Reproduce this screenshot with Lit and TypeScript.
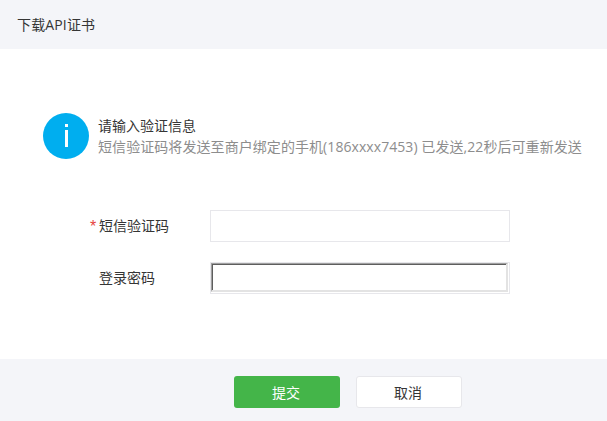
import { LitElement, html, css } from "lit";
import { customElement } from "lit/decorators.js";

@customElement("app-root")
export class AppRoot extends LitElement {
  static styles = css`
    :host { display: block; width: 607px; height: 421px; background: #fff; font-family: "Open Sans", "Noto Sans CJK SC", sans-serif; font-size: 14px; color: #353535; }
    .wrap { display: flex; flex-direction: column; height: 421px; }
    .head { height: 49px; background: #f4f5f9; display: flex; align-items: center; padding-left: 17px; padding-bottom: 2px; box-sizing: border-box; font-size: 14px; letter-spacing: 0.15px; color: #353535; }
    .main { flex: 1; }
    .tip { display: flex; align-items: center; gap: 9px; margin: 64px 0 0 43px; }
    .icon { width: 46px; height: 46px; border-radius: 50%; background: #00aeef; flex: none; }
    .icon svg { display: block; }
    .txt { padding-top: 2px; }
    .t1 { font-size: 14px; line-height: 18px; color: #353535; }
    .t2 { font-size: 14px; line-height: 20px; margin-top: 2px; letter-spacing: 0.07px; color: #8d8d8d; white-space: nowrap; }
    .form { margin-top: 51px; display: flex; flex-direction: column; gap: 20px; }
    .row { display: flex; align-items: center; height: 32px; }
    .label { width: 210px; box-sizing: border-box; padding-left: 99px; padding-bottom: 2px; position: relative; font-size: 14px; }
    .star { position: absolute; left: 90px; top: 2px; color: #e64340; font-size: 16px; line-height: 20px; font-family: "Liberation Sans", sans-serif; }
    .inp { width: 300px; height: 32px; box-sizing: border-box; border: 1px solid #e7e7eb; background: #fff; }
    .inner { width: 297px; height: 29px; box-sizing: border-box; border-style: solid; border-width: 1px 2px 2px 1px; border-color: #a0a0a0 #e3e3e3 #e3e3e3 #a0a0a0; box-shadow: inset 1px 1px 0 #5e5e5e; }
    .foot { height: 62px; box-sizing: border-box; background: #f4f5f9; display: flex; align-items: flex-start; padding: 17px 0 0 234px; gap: 16px; }
    .btn { width: 106px; height: 32px; box-sizing: border-box; border-radius: 3px; padding-right: 2px; display: flex; align-items: center; justify-content: center; font-size: 14px; }
    .ok { background: #44b549; color: #fff; }
    .no { background: #fff; border: 1px solid #e7e7eb; color: #353535; }
  `;
  render() {
    return html`<div class="wrap">
      <div class="head">下载API证书</div>
      <div class="main">
        <div class="tip">
          <div class="icon"><svg width="46" height="46" viewBox="0 0 46 46"><rect x="22" y="11" width="3" height="3" fill="#fff"/><rect x="22" y="17" width="3" height="17" fill="#fff"/></svg></div>
          <div class="txt">
            <div class="t1">请输入验证信息</div>
            <div class="t2">短信验证码将发送至商户绑定的手机(186xxxx7453) 已发送,22秒后可重新发送</div>
          </div>
        </div>
        <div class="form">
          <div class="row"><div class="label"><span class="star">*</span>短信验证码</div><div class="inp"></div></div>
          <div class="row"><div class="label">登录密码</div><div class="inp"><div class="inner"></div></div></div>
        </div>
      </div>
      <div class="foot"><div class="btn ok">提交</div><div class="btn no">取消</div></div>
    </div>`;
  }
}
